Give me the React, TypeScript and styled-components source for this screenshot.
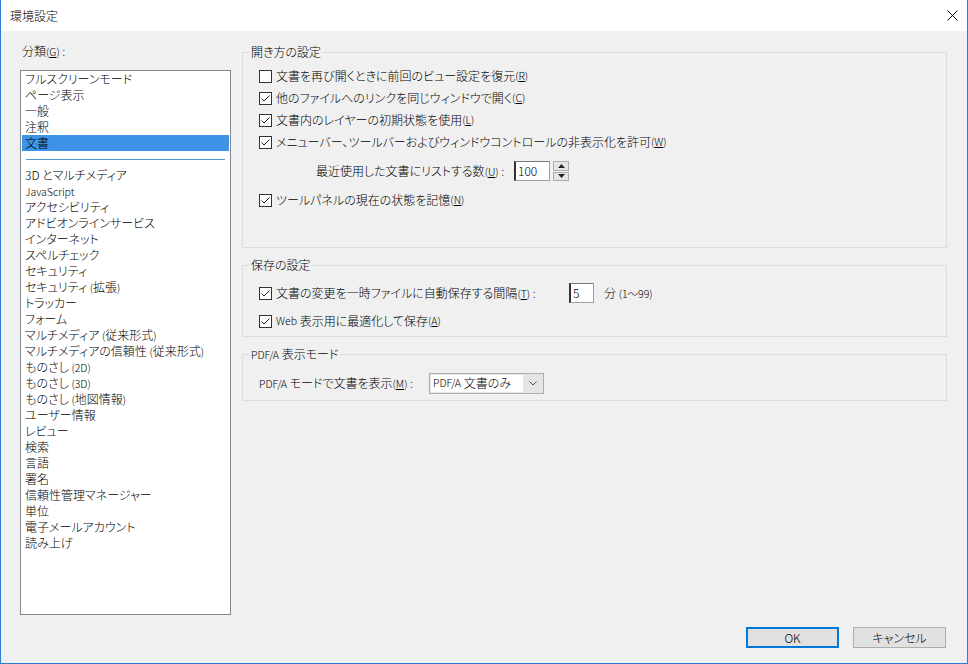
import React from 'react';
import styled, { createGlobalStyle } from 'styled-components';

const GlobalStyle = createGlobalStyle`
  html, body {
    margin: 0;
    padding: 0;
    background: #f0f0f0;
  }
  body {
    font-family: "Noto Sans CJK JP", "Noto Sans", sans-serif;
    font-size: 12px;
    font-weight: 300;
    line-height: 16px;
    color: #000;
    font-feature-settings: "palt";
  }
`;

const Window = styled.div`
  width: 968px;
  height: 664px;
  box-sizing: border-box;
  border: 1px solid #2b7cd3;
  border-top: none;
  background: #f0f0f0;
  display: flex;
  flex-direction: column;
`;

const TitleBar = styled.div`
  height: 31px;
  flex-shrink: 0;
  background: #fff;
  display: flex;
  align-items: center;
  justify-content: space-between;
  padding: 0 9px;
`;

const CloseButton = styled.div`
  width: 12px;
  height: 12px;
  display: flex;
  align-items: center;
  justify-content: center;
`;

const Body = styled.div`
  flex: 1;
  display: flex;
  flex-direction: column;
  padding: 12px 20px 16px 19px;
`;

const Main = styled.div`
  display: flex;
  gap: 11px;
`;

const LeftColumn = styled.div`
  width: 211px;
  flex-shrink: 0;
  display: flex;
  flex-direction: column;
`;

const CategoryLabel = styled.div`
  padding-left: 2px;
  margin-bottom: 10px;
`;

const ListBox = styled.ul`
  list-style: none;
  margin: 0;
  height: 545px;
  box-sizing: border-box;
  border: 1px solid #828790;
  background: #fff;
  padding: 0 1px;
`;

const ListItem = styled.li<{ $selected?: boolean }>`
  height: 16px;
  line-height: 15px;
  padding-left: 3px;
  white-space: nowrap;
  background: ${({ $selected }) => ($selected ? '#3d94e6' : 'transparent')};
`;

const Small = styled.span`
  font-size: 10.5px;
`;

const ListSeparator = styled.li`
  height: 1px;
  margin: 8px 4px 7px;
  background: #4b9ad8;
`;

const RightColumn = styled.div`
  width: 705px;
  flex-shrink: 0;
  margin-top: 1px;
  display: flex;
  flex-direction: column;
  gap: 9px;
`;

const Group = styled.fieldset<{ $padTop: number; $padBottom: number }>`
  margin: 0;
  min-width: 0;
  border: 1px solid #dcdcdc;
  padding: ${({ $padTop, $padBottom }) => `${$padTop}px 0 ${$padBottom}px 0`};
`;

const Legend = styled.legend`
  margin-left: 6px;
  padding: 0 2px;
  line-height: 16px;
`;

const Row = styled.div<{ $height?: number; $indent?: number; $gap?: number }>`
  height: ${({ $height }) => $height ?? 22}px;
  display: flex;
  align-items: center;
  padding-left: ${({ $indent }) => $indent ?? 16}px;
  margin-top: ${({ $gap }) => $gap ?? 0}px;
  white-space: nowrap;
`;

const CheckBox = styled.span`
  width: 13px;
  height: 13px;
  box-sizing: border-box;
  border: 1px solid #333;
  background: #fff;
  display: inline-flex;
  align-items: center;
  justify-content: center;
  margin-right: 4px;
  flex-shrink: 0;
`;

const FieldLabel = styled.span<{ $width: number }>`
  width: ${({ $width }) => $width}px;
  flex-shrink: 0;
`;

const TextInput = styled.div<{ $width: number }>`
  width: ${({ $width }) => $width}px;
  height: 20px;
  box-sizing: border-box;
  background: #fff;
  border: 1px solid #a0a0a0;
  border-left: 2px solid #333;
  border-top-color: #7a7a7a;
  padding-left: 2px;
  display: flex;
  align-items: center;
  flex-shrink: 0;
`;

const Spinner = styled.div`
  margin-left: 3px;
  width: 16px;
  height: 20px;
  display: flex;
  flex-direction: column;
  gap: 1px;
`;

const SpinButton = styled.div`
  flex: 1;
  box-sizing: border-box;
  border: 1px solid #adadad;
  background: #e5e5e5;
  display: flex;
  align-items: center;
  justify-content: center;
`;

const Unit = styled.span`
  margin-left: 10px;
`;

const Select = styled.div`
  width: 115px;
  height: 21px;
  box-sizing: border-box;
  border: 1px solid #adadad;
  background: #e5e5e5;
  display: flex;
  align-items: center;
  padding: 1px;
`;

const SelectValue = styled.span`
  width: 92px;
  height: 17px;
  background: #fff;
  display: flex;
  align-items: center;
  padding-left: 2px;
  box-sizing: border-box;
`;

const SelectArrow = styled.span`
  flex: 1;
  display: flex;
  align-items: center;
  justify-content: center;
`;

const Footer = styled.div`
  margin-top: 12px;
  padding-right: 1px;
  display: flex;
  justify-content: flex-end;
  gap: 14px;
`;

const Button = styled.button<{ $primary?: boolean }>`
  width: 93px;
  height: 21px;
  box-sizing: border-box;
  background: #e1e1e1;
  border: ${({ $primary }) => ($primary ? '2px solid #0078d7' : '1px solid #adadad')};
  font: inherit;
  color: #000;
  padding: 0;
  display: flex;
  align-items: center;
  justify-content: center;
`;

const Key: React.FC<{ k: string }> = ({ k }) => (
  <Small>
    (<u>{k}</u>)
  </Small>
);

const Check: React.FC<{ checked?: boolean }> = ({ checked }) => (
  <CheckBox>
    {checked && (
      <svg width="11" height="11" viewBox="0 0 11 11">
        <path d="M1.5 5.5 L4 8 L9.5 2.5" fill="none" stroke="#222" strokeWidth="1" />
      </svg>
    )}
  </CheckBox>
);

const topItems = ['フルスクリーンモード', 'ページ表示', '一般', '注釈', '文書'];

const otherItems: React.ReactNode[] = [
  '3D とマルチメディア',
  <Small key="js">JavaScript</Small>,
  'アクセシビリティ',
  'アドビオンラインサービス',
  'インターネット',
  'スペルチェック',
  'セキュリティ',
  <>セキュリティ <Small>(</Small>拡張<Small>)</Small></>,
  'トラッカー',
  'フォーム',
  <>マルチメディア <Small>(</Small>従来形式<Small>)</Small></>,
  <>マルチメディアの信頼性 <Small>(</Small>従来形式<Small>)</Small></>,
  <>ものさし <Small>(2D)</Small></>,
  <>ものさし <Small>(3D)</Small></>,
  <>ものさし <Small>(</Small>地図情報<Small>)</Small></>,
  'ユーザー情報',
  'レビュー',
  '検索',
  '言語',
  '署名',
  '信頼性管理マネージャー',
  '単位',
  '電子メールアカウント',
  '読み上げ',
];

const Triangle: React.FC<{ up?: boolean }> = ({ up }) => (
  <svg width="7" height="4" viewBox="0 0 7 4">
    <path d={up ? 'M0 4 L3.5 0 L7 4 Z' : 'M0 0 L3.5 4 L7 0 Z'} fill="#222" />
  </svg>
);

const App: React.FC = () => (
  <>
    <GlobalStyle />
    <Window>
      <TitleBar>
        <span>環境設定</span>
        <CloseButton>
          <svg width="11" height="11" viewBox="0 0 11 11">
            <path d="M0.5 0.5 L10.5 10.5 M10.5 0.5 L0.5 10.5" stroke="#000" strokeWidth="1" />
          </svg>
        </CloseButton>
      </TitleBar>
      <Body>
        <Main>
          <LeftColumn>
            <CategoryLabel>
              分類<Key k="G" /> :
            </CategoryLabel>
            <ListBox>
              {topItems.map((item) => (
                <ListItem key={item} $selected={item === '文書'}>
                  {item}
                </ListItem>
              ))}
              <ListSeparator />
              {otherItems.map((item, i) => (
                <ListItem key={i}>{item}</ListItem>
              ))}
            </ListBox>
          </LeftColumn>

          <RightColumn>
            <Group $padTop={5} $padBottom={36}>
              <Legend>開き方の設定</Legend>
              <Row>
                <Check />
                文書を再び開くときに前回のビュー設定を復元<Key k="R" />
              </Row>
              <Row>
                <Check checked />
                他のファイルへのリンクを同じウィンドウで開く<Key k="C" />
              </Row>
              <Row>
                <Check checked />
                文書内のレイヤーの初期状態を使用<Key k="L" />
              </Row>
              <Row>
                <Check checked />
                メニューバー、ツールバーおよびウィンドウコントロールの非表示化を許可<Key k="W" />
              </Row>
              <Row $height={36} $indent={73}>
                <FieldLabel $width={198}>
                  最近使用した文書にリストする数<Key k="U" /> :
                </FieldLabel>
                <TextInput $width={36}>100</TextInput>
                <Spinner>
                  <SpinButton>
                    <Triangle up />
                  </SpinButton>
                  <SpinButton>
                    <Triangle />
                  </SpinButton>
                </Spinner>
              </Row>
              <Row>
                <Check checked />
                ツールパネルの現在の状態を記憶<Key k="N" />
              </Row>
            </Group>

            <Group $padTop={8} $padBottom={3}>
              <Legend>保存の設定</Legend>
              <Row $height={24}>
                <Check checked />
                <FieldLabel $width={293}>
                  文書の変更を一時ファイルに自動保存する間隔<Key k="T" /> :
                </FieldLabel>
                <TextInput $width={25}>5</TextInput>
                <Unit>
                  分 <Small>(1〜99)</Small>
                </Unit>
              </Row>
              <Row $height={24} $gap={4}>
                <Check checked />
                <Small>Web</Small>&nbsp;表示用に最適化して保存<Key k="A" />
              </Row>
            </Group>

            <Group $padTop={8} $padBottom={5}>
              <Legend>
                <Small>PDF/A</Small> 表示モード
              </Legend>
              <Row $height={24}>
                <FieldLabel $width={170}>
                  <Small>PDF/A</Small> モードで文書を表示<Key k="M" /> :
                </FieldLabel>
                <Select>
                  <SelectValue>
                    <Small>PDF/A</Small>&nbsp;文書のみ
                  </SelectValue>
                  <SelectArrow>
                    <svg width="8" height="5" viewBox="0 0 8 5">
                      <path d="M0.5 0.5 L4 4 L7.5 0.5" fill="none" stroke="#555" strokeWidth="1" />
                    </svg>
                  </SelectArrow>
                </Select>
              </Row>
            </Group>
          </RightColumn>
        </Main>

        <Footer>
          <Button $primary>OK</Button>
          <Button>キャンセル</Button>
        </Footer>
      </Body>
    </Window>
  </>
);

export default App;
